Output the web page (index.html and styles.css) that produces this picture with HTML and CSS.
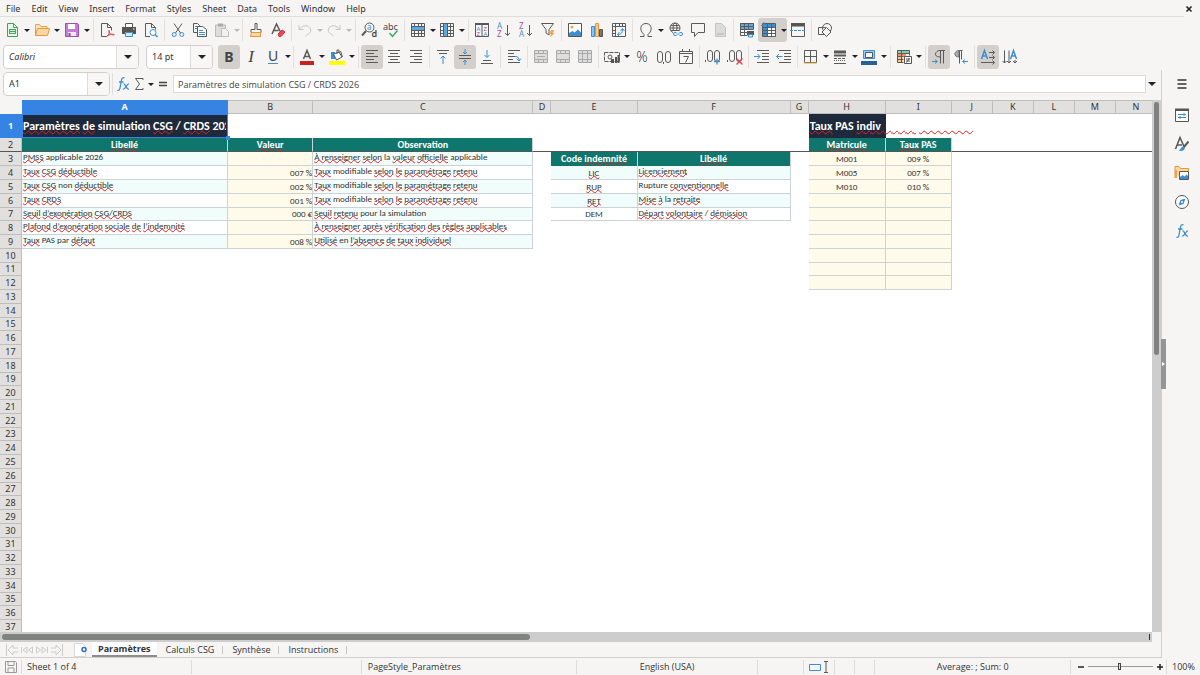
FILE: index.html
```html
<!DOCTYPE html>
<html lang="en">
<head>
<meta charset="utf-8">
<title>Paramètres de simulation</title>
<link rel="stylesheet" href="styles.css">
</head>
<body>
<header class="menubar">
  <nav class="menus" aria-label="Menu">
    <button>File</button><button>Edit</button><button>View</button><button>Insert</button><button>Format</button><button>Styles</button><button>Sheet</button><button>Data</button><button>Tools</button><button>Window</button><button>Help</button>
  </nav>
  <button class="close" aria-label="Close"><svg width="8" height="8" viewBox="0 0 8 8"><path d="M1.500 1.500l5 5M6.500 1.500l-5 5" stroke="#222" stroke-width="1.600" fill="none"/></svg></button>
</header>

<div class="toolbar standard" role="toolbar" aria-label="Standard">
  <button class="tool" aria-label="New"><svg viewBox="0 0 16 16"><path d="M3.500 1.500h6l4 4v9h-10z" fill="#e9f7ec" stroke="#3da558"/><path d="M9.500 1.500v4h4" class="n" stroke="#3da558"/><path d="M5 7h7v5h-7z" fill="#43a85b"/><path d="M6 8.500h5M6 10.500h5" stroke="#fff" stroke-width=".8"/></svg></button><button class="drop" aria-label="New options"></button>
  <button class="tool" aria-label="Open"><svg viewBox="0 0 16 16"><path d="M1.500 13.500v-11h4l1.500 2h6v2" fill="#fbe3bd" stroke="#e8a04a"/><path d="M1.500 13.500l2-7h12l-2 7z" fill="#fbd9a4" stroke="#e8963a"/></svg></button><button class="drop" aria-label="Open options"></button>
  <button class="tool" aria-label="Save"><svg viewBox="0 0 16 16"><path d="M1.500 1.500h12l1 1v12h-13z" fill="#c47fd4" stroke="#9d4fb3"/><path d="M4 2h7v5h-7z" fill="#fff"/><path d="M4 10h8v4h-8z" fill="#f3e8f6"/><path d="M5.500 11v3" stroke="#8d45a2" stroke-width="2"/></svg></button><button class="drop" aria-label="Save options"></button>
  <i class="sep"></i>
  <button class="tool" aria-label="Export as PDF"><svg viewBox="0 0 16 16"><path d="M8 14.500h-5.500v-13h6l4 4v3M8.500 1.500v4h4" class="k"/><path d="M7.500 14.500c3-1.500 3.500-6 2.500-6s0 4.500 5 4.500c1.500-1-4-1.500-7.500 1.500z" class="n" stroke="#e0404c"/></svg></button>
  <button class="tool" aria-label="Print"><svg viewBox="0 0 16 16"><path d="M4.500 5v-3.500h7v3.500" fill="#fff" stroke="#555"/><path d="M1 5h14v7h-3v-2h-8v2h-3z" fill="#555"/><path d="M4.500 10.500h7v4h-7z" fill="#d6ebf9" stroke="#3d8fd0"/><path d="M12 7h1.500" stroke="#fff"/></svg></button>
  <button class="tool" aria-label="Print preview"><svg viewBox="0 0 16 16"><path d="M7 14.500h-4.500v-13h6l4 4v2M8.500 1.500v4h4" class="k"/><circle cx="10" cy="10.500" r="3" fill="#fff" stroke="#3d8fd0"/><path d="M12 12.500l2.500 2.500" class="b" stroke-width="1.500"/></svg></button>
  <i class="sep"></i>
  <button class="tool" aria-label="Cut"><svg viewBox="0 0 16 16"><path d="M4 1.500l6.500 9.500M12 1.500l-6.500 9.500" class="k"/><circle cx="4.200" cy="12.500" r="2" class="b"/><circle cx="11.800" cy="12.500" r="2" class="b"/></svg></button>
  <button class="tool" aria-label="Copy"><svg viewBox="0 0 16 16"><path d="M5 10.500h-3.500v-9h4l2 2v1" class="k"/><path d="M5.500 4.500h5l4 3v7h-9z" fill="#fff" stroke="#555"/><path d="M3 4.500h2M3 6.500h2M7 8.500h4M7 10.500h6M7 12.500h6" class="b"/></svg></button>
  <button class="tool off" aria-label="Paste"><svg viewBox="0 0 16 16"><path d="M1.500 3h10v11.500h-10z" fill="#ddd" stroke="#bbb"/><path d="M4 1.500h5v3h-5z" fill="#aaa"/><path d="M7.500 6.500h4l3 3v5h-7z" fill="#f1f1f1" stroke="#bbb"/></svg></button><button class="drop slim off" aria-label="Paste options"></button>
  <i class="sep"></i>
  <button class="tool" aria-label="Clone formatting"><svg viewBox="0 0 16 16"><path d="M7 1.500h2v6h4v3h-10v-3h4z" class="k"/><path d="M3.500 10.500h9v4h-10z" fill="#fbd9a4" stroke="#e8963a"/></svg></button>
  <button class="tool" aria-label="Clear formatting"><svg viewBox="0 0 16 16"><path d="M2 12l4.500-10 4 8M3.500 8.500h5" class="k" stroke-width="1.500"/><path d="M8 12l4-4 3 2-4 4.500h-2z" fill="#ee4757" stroke="#c93442"/></svg></button>
  <i class="sep"></i>
  <button class="tool off" aria-label="Undo"><svg viewBox="0 0 16 16"><path d="M2 3v4.500h4.500M2.500 7c4-5 10-3.500 11 0s-2 4.500-5 7" class="n" stroke="#c4c4c4"/></svg></button><button class="drop slim off" aria-label="Undo steps"></button>
  <button class="tool off" aria-label="Redo"><svg viewBox="0 0 16 16"><path d="M14 3v4.500h-4.500M13.500 7c-4-5-10-3.500-11 0s2 4.500 5 7" class="n" stroke="#c4c4c4"/></svg></button><button class="drop off" aria-label="Redo steps"></button>
  <i class="sep"></i>
  <button class="tool" aria-label="Find and replace"><svg viewBox="0 0 16 16"><circle cx="8.500" cy="5.500" r="4.500" class="k"/><path d="M5 9l-4 4.500" class="k" stroke-width="2"/><text x="6" y="8" font-size="8" fill="#3d8fd0">a</text><text x="10.500" y="15" font-size="9" fill="#444" font-weight="600">d</text></svg></button>
  <button class="tool" aria-label="Spelling"><svg viewBox="0 0 16 16"><text x="0" y="7.500" font-size="9" fill="#444">abc</text><path d="M6.500 11l3 3.500 5-6" class="n" stroke="#35a663" stroke-width="1.400"/></svg></button>
  <i class="sep"></i>
  <button class="tool" aria-label="Row"><svg viewBox="0 0 16 16"><path d="M1 5h14v3h-14z" fill="#5aa9e0"/><path d="M1.500 1.500h13v13h-13zM1.500 4.500h13M1.500 8.500h13M1.500 11.500h13M4.500 1.500v3M8.500 1.500v3M11.500 1.500v3M4.500 8.500v6M8.500 8.500v6M11.500 8.500v6" class="k"/></svg></button><button class="drop slim" aria-label="Row options"></button>
  <button class="tool" aria-label="Column"><svg viewBox="0 0 16 16"><path d="M5 1h3.500v14h-3.500z" fill="#5aa9e0"/><path d="M1.500 1.500h13v13h-13zM4.500 1.500v13M8.500 1.500v13M11.500 1.500v13M1.500 4.500h3M1.500 8.500h3M1.500 11.500h3M8.500 4.500h6M8.500 8.500h6M8.500 11.500h6" class="k"/></svg></button><button class="drop" aria-label="Column options"></button>
  <i class="sep"></i>
  <button class="tool" aria-label="Sort"><svg viewBox="0 0 16 16"><path d="M1 1h14v2h-14z" fill="#555"/><path d="M1.500 1.500h13v13h-13zM8 2v12" class="k"/><text x="2.500" y="8.500" font-size="6" fill="#3d8fd0">A</text><text x="2.500" y="14" font-size="6" fill="#9d4fb3">Z</text><text x="9.500" y="8.500" font-size="6" fill="#9d4fb3">Z</text><text x="9.500" y="14" font-size="6" fill="#3d8fd0">A</text></svg></button>
  <button class="tool" aria-label="Sort ascending"><svg viewBox="0 0 16 16"><text x="1" y="7" font-size="8" fill="#3d8fd0">A</text><text x="1" y="15" font-size="8" fill="#9d4fb3">Z</text><path d="M11.500 3v10.500M9 11l2.500 2.500 2.500-2.500" class="k"/></svg></button>
  <button class="tool" aria-label="Sort descending"><svg viewBox="0 0 16 16"><text x="1" y="7" font-size="8" fill="#9d4fb3">Z</text><text x="1" y="15" font-size="8" fill="#3d8fd0">A</text><path d="M11.500 3v10.500M9 11l2.500 2.500 2.500-2.500" class="k"/></svg></button>
  <button class="tool" aria-label="AutoFilter"><svg viewBox="0 0 16 16"><path d="M1.500 1.500h12l-4.500 6v5.500l-3-2v-3.500z" class="k"/><path d="M11 8h3.500l-2 3h2l-4.500 4.500 1-3.500h-1.500z" fill="#f3a04a"/></svg></button>
  <i class="sep"></i>
  <button class="tool" aria-label="Insert image"><svg viewBox="0 0 16 16"><path d="M1.500 1.500h13v13h-13z" fill="#fff" stroke="#555"/><path d="M2 14v-3l3.500-2 2 1.500 3.500-3 3 3v3.500z" fill="#3d8fd0"/><circle cx="5" cy="5" r="1.500" fill="#f3a04a"/></svg></button>
  <button class="tool" aria-label="Insert chart"><svg viewBox="0 0 16 16"><path d="M2.500 4.500h3v10h-3z" fill="#8cc3ec" stroke="#3d8fd0"/><path d="M6.500 1.500h3v13h-3z" fill="#fbc98a" stroke="#e8963a"/><path d="M10.500 7.500h3v7h-3z" fill="#777" stroke="#555"/></svg></button>
  <button class="tool" aria-label="Pivot table"><svg viewBox="0 0 16 16"><path d="M1.500 1.500h13v13h-13zM1.500 4.500h13M4.500 1.500v13M8.500 1.500v3M11.500 1.500v3M1.500 8.500h3M1.500 11.500h3" class="k"/><path d="M6.500 12.500c4 0 5-2 5-5.500M8.500 10l-2 2.500 2 2M9.500 9l2-2.500 2 2.500" class="b"/></svg></button>
  <i class="sep"></i>
  <button class="tool" aria-label="Special character"><svg viewBox="0 0 16 16"><path d="M2 14.500h4v-2c-5-4-4-11 2-11s7 7 2 11v2h4" class="k"/></svg></button><button class="drop" aria-label="More characters"></button>
  <button class="tool" aria-label="Hyperlink"><svg viewBox="0 0 16 16"><circle cx="7" cy="6" r="5" class="k"/><ellipse cx="7" cy="6" rx="2" ry="5" class="k"/><path d="M2 6h10M3 3.500h8M3 8.500h8" class="k"/><path d="M5 9h10v6h-10z" fill="#f6f5f4"/><path d="M8.500 10.500h-1.500a1.500 1.500 0 000 3h1.500M11.500 10.500h1.500a1.500 1.500 0 010 3h-1.500M8.500 12h3" class="b"/></svg></button>
  <button class="tool" aria-label="Comment"><svg viewBox="0 0 16 16"><path d="M1.500 1.500h13v9h-6.500l-3.500 4v-4h-3z" class="k"/></svg></button>
  <button class="tool off" aria-label="Headers and footers"><svg viewBox="0 0 16 16"><path d="M3.500 1.500h6l4 4v9h-10z" fill="#dcdcdc" stroke="#c4c4c4"/><path d="M5 11h7v2h-7z" fill="#c4c4c4"/></svg></button>
  <i class="sep"></i>
  <button class="tool" aria-label="Define print area"><svg viewBox="0 0 16 16"><path d="M1 1h14v6h-14z" fill="#5aa9e0"/><path d="M1.500 1.500h13v6M1.500 1.500v12h7M1.500 4.500h13M1.500 7.500h13M1.500 10.500h7M5.500 1.500v12M9.500 1.500v6" class="k"/><path d="M8 9h7v4h-7z" fill="#555"/><path d="M9.500 12.500h4v2.500h-4z" fill="#d6ebf9" stroke="#3d8fd0"/></svg></button>
  <span class="pair on"><button class="tool" aria-label="Freeze rows and columns"><svg viewBox="0 0 16 16"><path d="M2 2h13v3h-13zM2 2h4v13h-4z" fill="#3d8fd0"/><path d="M6.500 5.500h8v9h-8z" fill="#fff"/><path d="M1.500 1.500h13v13h-13zM6.500 1.500v13M1.500 5.500h13M1.500 8.500h13M1.500 11.500h13M10.500 1.500v13" class="k"/><path d="M0 3.500h4M3 0v4" class="b"/></svg></button><button class="drop slim" aria-label="Freeze options"></button></span>
  <button class="tool" aria-label="Split window"><svg viewBox="0 0 16 16"><path d="M1 1h14v3.500h-14z" fill="#555"/><path d="M1.500 1.500h13v13h-13z" class="k"/><path d="M0 8.500h16" class="b" stroke-dasharray="3 1"/></svg></button>
  <i class="sep"></i>
  <button class="tool" aria-label="Show draw functions"><svg viewBox="0 0 16 16"><path d="M1.500 5.500h7v7h-7z" class="k"/><circle cx="10" cy="6" r="4.500" class="k"/><path d="M9.500 5.500l4.500 4.500-4.500 4.500-4.500-4.500z" fill="#f6f5f4" stroke="#555"/></svg></button>
</div>

<div class="toolbar formatting" role="toolbar" aria-label="Formatting">
  <div class="combo font"><input aria-label="Font name" value="Calibri" class="italic"><button aria-label="Font list"></button></div>
  <div class="combo size"><input aria-label="Font size" value="14 pt"><button aria-label="Size list"></button></div>
  <button class="tool letter on"><b>B</b></button>
  <button class="tool letter serif"><em>I</em></button>
  <button class="tool letter under"><span>U</span></button><button class="drop slim" aria-label="Underline styles"></button>
  <i class="sep"></i>
  <button class="tool" aria-label="Font color"><svg viewBox="0 0 16 16"><path d="M4.500 10l3.500-8.500 3.500 8.500M5.500 7.500h5" class="k" stroke-width="1.500"/><path d="M1 12h14v4h-14z" fill="#c9211e"/></svg></button><button class="drop" aria-label="Font colors"></button>
  <button class="tool" aria-label="Background color"><svg viewBox="0 0 16 16"><path d="M2 3h4v7h-4z" fill="#3d8fd0"/><path d="M4.500 5l5.500-2 3 5-5.500 3z" fill="#fff" stroke="#555"/><path d="M8 5v-4h2v3M11.500 2l2 6" class="k"/><path d="M0 12h16v4h-16z" fill="#ff0"/></svg></button><button class="drop" aria-label="Background colors"></button>
  <i class="sep"></i>
  <button class="tool on" aria-label="Align left"><svg viewBox="0 0 16 16"><path d="M2 1.500h12M2 4.500h8M2 7.500h12M2 10.500h8M2 13.500h12" class="k"/></svg></button>
  <button class="tool" aria-label="Center"><svg viewBox="0 0 16 16"><path d="M2 1.500h12M4 4.500h8M2 7.500h12M4 10.500h8M2 13.500h12" class="k"/></svg></button>
  <button class="tool" aria-label="Align right"><svg viewBox="0 0 16 16"><path d="M2 1.500h12M6 4.500h8M2 7.500h12M6 10.500h8M2 13.500h12" class="k"/></svg></button>
  <i class="sep"></i>
  <button class="tool" aria-label="Align top"><svg viewBox="0 0 16 16"><path d="M2 1.500h12M4 4.500h8" class="k"/><path d="M8 15v-8M5.500 9.500l2.500-2.500 2.500 2.500" class="b"/></svg></button>
  <button class="tool on" aria-label="Center vertically"><svg viewBox="0 0 16 16"><path d="M2 6.500h12M2 9.500h12" class="k"/><path d="M8 0v5M6 3l2 2 2-2M8 16v-5M6 13l2-2 2 2" class="b"/></svg></button>
  <button class="tool" aria-label="Align bottom"><svg viewBox="0 0 16 16"><path d="M4 11.500h8M2 14.500h12" class="k"/><path d="M8 1v7M5.500 6l2.500 2.500 2.500-2.500" class="b"/></svg></button>
  <i class="sep"></i>
  <button class="tool" aria-label="Wrap text"><svg viewBox="0 0 16 16"><path d="M2 1.500h12M2 4.500h6M2 7.500h7M2 10.500h5M2 13.500h12" class="k"/><path d="M9 7.500c3 0 4 1 4 4M10.500 9.500l2.500 2.500 2-2.500" class="b"/></svg></button>
  <i class="sep"></i>
  <button class="tool off" aria-label="Merge and center"><svg viewBox="0 0 16 16"><path d="M1.500 1.500h13v12h-13z" fill="#ddd" stroke="#aaa"/><path d="M1.500 4.500h13M1.500 10.500h13M5.500 1.500v3M10.500 1.500v3M5.500 10.500v3M10.500 10.500v3M4 7.500h8" class="g"/></svg></button>
  <button class="tool off" aria-label="Merge cells"><svg viewBox="0 0 16 16"><path d="M1.500 1.500h13v12h-13z" fill="#ddd" stroke="#aaa"/><path d="M1.500 4.500h13M1.500 10.500h13M5.500 1.500v3M10.500 1.500v3M5.500 10.500v3M10.500 10.500v3" class="g"/></svg></button>
  <button class="tool off" aria-label="Split cells"><svg viewBox="0 0 16 16"><path d="M1.500 1.500h13v12h-13z" fill="#ddd" stroke="#aaa"/><path d="M1.500 4.500h13M1.500 10.500h13M5.500 1.500v12M10.500 1.500v12" class="g"/></svg></button>
  <i class="sep"></i>
  <button class="tool" aria-label="Format as currency"><svg viewBox="0 0 16 16"><path d="M0.500 3.500h15v9h-15z" class="k" stroke-dasharray="4 1"/><circle cx="6" cy="8" r="2" class="k"/><path d="M7 10h3v4h-3zM11 8h2v6h-2zM13.500 6h2v8h-2z" fill="#555"/></svg></button><button class="drop" aria-label="Currencies"></button>
  <button class="tool letter" aria-label="Format as percent"><span class="glyph">%</span></button>
  <button class="tool" aria-label="Format as number"><svg viewBox="0 0 16 16"><rect x="1.500" y="2.500" width="5" height="11" rx="2.500" class="k"/><rect x="9.500" y="2.500" width="5" height="11" rx="2.500" class="k"/><path d="M7.500 13v2" class="k"/></svg></button>
  <button class="tool" aria-label="Format as date"><svg viewBox="0 0 16 16"><path d="M1.500 2.500h13v12h-13zM1.500 4.500h13M4.500 0v3M11.500 0v3M5.500 7.500h5l-3 6" class="k"/></svg></button>
  <i class="sep"></i>
  <button class="tool" aria-label="Add decimal place"><svg viewBox="0 0 16 16"><rect x="2.500" y="1.500" width="5" height="11" rx="2.500" class="k"/><rect x="9.500" y="1.500" width="5" height="11" rx="2.500" class="k"/><path d="M.5 11v2" class="k"/><path d="M9 12.500h6M12 9.500v6" class="b" stroke-width="1.300"/></svg></button>
  <button class="tool" aria-label="Delete decimal place"><svg viewBox="0 0 16 16"><rect x="2.500" y="1.500" width="5" height="11" rx="2.500" class="k"/><rect x="9.500" y="1.500" width="5" height="11" rx="2.500" class="k"/><path d="M.5 11v2" class="k"/><path d="M9.500 9.500l6 6M15.500 9.500l-6 6" class="n" stroke="#e0404c" stroke-width="1.300"/></svg></button>
  <i class="sep"></i>
  <button class="tool" aria-label="Increase indent"><svg viewBox="0 0 16 16"><path d="M3 1.500h12M8 4.500h7M8 7.500h7M8 10.500h7M3 13.500h12" class="k"/><path d="M0 7.500h6M3.500 5l2.500 2.500-2.500 2.500" class="b"/></svg></button>
  <button class="tool" aria-label="Decrease indent"><svg viewBox="0 0 16 16"><path d="M3 1.500h12M8 4.500h7M8 7.500h7M8 10.500h7M3 13.500h12" class="k"/><path d="M6.500 7.500h-6M3 5l-2.500 2.500 2.500 2.500" class="b"/></svg></button>
  <i class="sep"></i>
  <button class="tool" aria-label="Borders"><svg viewBox="0 0 16 16"><path d="M1.500 1.500h12v12h-12zM7.500 1.500v12M1.500 7.500h12" class="k"/><path d="M1 14h13" class="n" stroke="#e8a04a"/></svg></button><button class="drop slim" aria-label="Border presets"></button>
  <button class="tool" aria-label="Border style"><svg viewBox="0 0 16 16"><path d="M2 3h12" class="k" stroke-width="3"/><path d="M2 6.500h12" class="k" stroke-width="2"/><path d="M2 9.500h12" class="k" stroke-dasharray="3 1"/><path d="M2 11.500h12" class="k" stroke-dasharray="1 1"/><path d="M2 14.500h12" class="k"/></svg></button><button class="drop slim" aria-label="Border styles"></button>
  <button class="tool" aria-label="Border color"><svg viewBox="0 0 16 16"><path d="M2.500 1.500h11v8h-11z" fill="#9fcbef" stroke="#3d8fd0"/><path d="M4.500 3.500h7v5h-7z" fill="#f6f5f4" stroke="#555"/><path d="M0 12h16v4h-16z" fill="#2a6099"/></svg></button><button class="drop" aria-label="Border colors"></button>
  <i class="sep"></i>
  <button class="tool" aria-label="Conditional formatting"><svg viewBox="0 0 16 16"><path d="M1 1h13v3h-13z" fill="#8bd0a0"/><path d="M1 4h9v4h-9z" fill="#f08b80"/><path d="M1 8h6v5h-6z" fill="#fbc98a"/><path d="M1.500 1.500h12v5M1.500 1.500v12h6M1.500 4.500h12M1.500 7.500h6M1.500 10.500h6M5.500 1.500v12" class="k"/><path d="M8.500 7.500h7v7h-7z" fill="#fff" stroke="#555"/><path d="M10 10h4M10 12h4M13.500 9l-3 4.500" class="k"/></svg></button><button class="drop" aria-label="Conditional formats"></button>
  <i class="sep"></i>
  <button class="tool on" aria-label="Left to right"><svg viewBox="0 0 16 16"><path d="M9 8c-7 0-5-6.500 0-6.500h5M9.500 1.500v13M12.500 1.500v13" class="k"/><path d="M1 12.500h5M4 10.500l2.500 2-2.500 2" class="b"/></svg></button>
  <button class="tool" aria-label="Right to left"><svg viewBox="0 0 16 16"><path d="M6 8c-6 0-5-6.500 0-6.500z" fill="#aaa" stroke="#777"/><path d="M6.500 14.500v-13h3M8.500 1.500v9" class="k"/><path d="M15 12.500h-5M12 10.500l-2.500 2 2.500 2" class="b"/></svg></button>
  <i class="sep"></i>
  <button class="tool on" aria-label="Text direction left to right"><svg viewBox="0 0 16 16"><path d="M1.500 10l3-8.500 3 8.500M2.500 7h4" class="b" stroke-width="1.500"/><path d="M9 3.500h5.500M9 8.500h5.500M1 13.500h13M12.500 1.500l2 2-2 2M12.500 6.500l2 2-2 2M12.500 11.500l2 2-2 2" class="k"/></svg></button>
  <button class="tool" aria-label="Text direction top to bottom"><svg viewBox="0 0 16 16"><path d="M8.500 10l3-8.500 3 8.500M9.500 7h4" class="b" stroke-width="1.500"/><path d="M2.500 1.500v12.500M7 1.500v12.500M13 11v3M.5 12l2 2 2-2M5 12l2 2 2-2M11 12l2 2 2-2" class="k"/></svg></button>
</div>

<main class="workspace">
  <section class="document">
    <div class="formulabar">
      <div class="combo name"><input aria-label="Name box" value="A1"><button aria-label="Named ranges"></button></div>
      <i class="sep"></i>
      <button class="fx" aria-label="Function wizard"><svg width="14" height="16" viewBox="0 0 14 16"><use href="#fx"/></svg></button>
      <button class="fx" aria-label="Sum"><svg width="10" height="14" viewBox="0 0 10 14"><path d="M9 3v-1.500h-7.500l4 5.500-4 5.500h7.500v-1.500" class="k"/></svg></button><button class="drop" aria-label="Sum functions"></button>
      <button class="fx" aria-label="Formula"><svg width="10" height="10" viewBox="0 0 10 10"><path d="M1 3.500h8M1 6.500h8" stroke="#444" stroke-width="1.500"/></svg></button>
      <input class="formula" aria-label="Formula input" value="Paramètres de simulation CSG / CRDS 2026">
      <button class="expand" aria-label="Expand formula bar"></button>
    </div>
    <div class="grid-area">
      <div class="sheet">
        <table>
          <colgroup><col class="w-head"><col class="w-a"><col class="w-b"><col class="w-c"><col class="w-d"><col class="w-e"><col class="w-f"><col class="w-d"><col class="w-h"><col class="w-i"><col class="w-std" span="5"></colgroup>
          <thead><tr><td></td><th class="sel">A</th><th>B</th><th>C</th><th>D</th><th>E</th><th>F</th><th>G</th><th>H</th><th>I</th><th>J</th><th>K</th><th>L</th><th>M</th><th>N</th></tr></thead>
          <tbody>
            <tr class="title"><th class="sel">1</th><td class="navy cursor"><div class="clip"><u>Paramètres</u> <u>de</u> simulation <u>CSG</u> / <u>CRDS</u> 2026</div></td><td></td><td></td><td></td><td></td><td></td><td></td><td class="navy"><div class="spill"><u>Taux</u> PAS <u>indiv&nbsp;&nbsp;&nbsp;&nbsp;&nbsp;&nbsp;&nbsp;&nbsp;&nbsp;&nbsp;&nbsp;&nbsp;&nbsp;</u> <u>&nbsp;&nbsp;&nbsp;&nbsp;&nbsp;&nbsp;&nbsp;&nbsp;&nbsp;&nbsp;&nbsp;&nbsp;&nbsp;&nbsp;&nbsp;&nbsp;&nbsp;&nbsp;&nbsp;&nbsp;</u></div></td><td></td><td></td><td></td><td></td><td></td><td></td></tr>
            <tr class="freeze"><th>2</th><td class="teal"><u>Libellé</u></td><td class="teal"><u>Valeur</u></td><td class="teal">Observation</td><td></td><td></td><td></td><td></td><td class="teal"><u>Matricule</u></td><td class="teal"><u>Taux</u> PAS</td><td></td><td></td><td></td><td></td><td></td></tr>
            <tr><th>3</th><td class="mint"><u>PMSS</u> applicable 2026</td><td class="cream"></td><td class="mint"><u>À renseigner</u> <u>selon</u> la <u>valeur</u> <u>officielle</u> applicable</td><td></td><td class="teal">Code <u>indemnité</u></td><td class="teal"><u>Libellé</u></td><td></td><td class="cream mid">M001</td><td class="cream mid">009 %</td></tr>
            <tr><th>4</th><td class="plain"><u>Taux</u> <u>CSG</u> <u>déductible</u></td><td class="cream">007 %</td><td class="plain"><u>Taux</u> modifiable <u>selon</u> <u>le</u> <u>paramétrage</u> <u>retenu</u></td><td></td><td class="mint mid"><u>LIC</u></td><td class="mint"><u>Licenciement</u></td><td></td><td class="cream mid">M005</td><td class="cream mid">007 %</td></tr>
            <tr><th>5</th><td class="mint"><u>Taux</u> <u>CSG</u> non <u>déductible</u></td><td class="cream">002 %</td><td class="mint"><u>Taux</u> modifiable <u>selon</u> <u>le</u> <u>paramétrage</u> <u>retenu</u></td><td></td><td class="plain mid"><u>RUP</u></td><td class="plain">Rupture <u>conventionnelle</u></td><td></td><td class="cream mid">M010</td><td class="cream mid">010 %</td></tr>
            <tr><th>6</th><td class="plain"><u>Taux</u> <u>CRDS</u></td><td class="cream">001 %</td><td class="plain"><u>Taux</u> modifiable <u>selon</u> <u>le</u> <u>paramétrage</u> <u>retenu</u></td><td></td><td class="mint mid"><u>RET</u></td><td class="mint"><u>Mise</u> <u>à</u> la <u>retraite</u></td><td></td><td class="cream"></td><td class="cream"></td></tr>
            <tr><th>7</th><td class="mint"><u>Seuil</u> <u>d’exonération</u> <u>CSG/CRDS</u></td><td class="cream">000 €</td><td class="mint"><u>Seuil</u> <u>retenu</u> pour la simulation</td><td></td><td class="plain mid">DEM</td><td class="plain"><u>Départ</u> <u>volontaire</u> / <u>démission</u></td><td></td><td class="cream"></td><td class="cream"></td></tr>
            <tr><th>8</th><td class="plain"><u>Plafond</u> <u>d’exonération</u> <u>sociale</u> <u>de</u> <u>l’indemnité</u></td><td class="cream"></td><td class="plain"><u>À renseigner</u> <u>après</u> <u>vérification</u> <u>des</u> <u>règles</u> <u>applicables</u></td><td></td><td></td><td></td><td></td><td class="cream"></td><td class="cream"></td></tr>
            <tr><th>9</th><td class="mint"><u>Taux</u> PAS par <u>défaut</u></td><td class="cream">008 %</td><td class="mint"><u>Utilisé</u> en <u>l’absence</u> <u>de</u> <u>taux</u> <u>individuel</u></td><td></td><td></td><td></td><td></td><td class="cream"></td><td class="cream"></td></tr>
            <tr><th>10</th><td colspan="7"></td><td class="cream"></td><td class="cream"></td></tr>
            <tr><th>11</th><td colspan="7"></td><td class="cream"></td><td class="cream"></td></tr>
            <tr><th>12</th><td colspan="7"></td><td class="cream"></td><td class="cream"></td></tr>
            <tr><th>13</th></tr><tr><th>14</th></tr><tr><th>15</th></tr><tr><th>16</th></tr><tr><th>17</th></tr><tr><th>18</th></tr><tr><th>19</th></tr><tr><th>20</th></tr><tr><th>21</th></tr><tr><th>22</th></tr><tr><th>23</th></tr><tr><th>24</th></tr><tr><th>25</th></tr><tr><th>26</th></tr><tr><th>27</th></tr><tr><th>28</th></tr><tr><th>29</th></tr><tr><th>30</th></tr><tr><th>31</th></tr><tr><th>32</th></tr><tr><th>33</th></tr><tr><th>34</th></tr><tr><th>35</th></tr><tr><th>36</th></tr><tr><th>37</th></tr>
          </tbody>
        </table>
      </div>
      <div class="vscroll"><div class="thumb"></div></div>
    </div>
    <div class="hscroll"><div class="thumb"></div><div class="splitter"></div></div>
    <div class="tabs">
      <div class="nav">
        <button aria-label="First sheet"><svg width="14" height="14" viewBox="0 0 14 14"><path d="M1.500 1v12M13 5h-5v-3l-5 5 5 5v-3h5" class="p"/></svg></button>
        <button aria-label="Previous sheet"><svg width="14" height="14" viewBox="0 0 14 14"><path d="M1.500 4v6M7 4l-4 3 4 3zM12.500 4l-4 3 4 3z" class="p"/></svg></button>
        <button aria-label="Next sheet"><svg width="14" height="14" viewBox="0 0 14 14"><path d="M1.500 4l4 3-4 3zM7 4l4 3-4 3zM12.500 4v6" class="p"/></svg></button>
        <button aria-label="Last sheet"><svg width="14" height="14" viewBox="0 0 14 14"><path d="M12.500 1v12M1 5h5v-3l5 5-5 5v-3h-5" class="p"/></svg></button>
      </div>
      <button class="add" aria-label="Add sheet"><svg width="14" height="16" viewBox="0 0 14 16"><path d="M.5 1.500h8l3 3v10h-11z" fill="#fff" stroke="#d8d8d8"/><circle cx="10" cy="7.500" r="2" fill="#fff" stroke="#2a6cc0" stroke-width="1.500"/></svg></button>
      <button class="tab current">Paramètres</button><button class="tab">Calculs CSG</button><button class="tab">Synthèse</button><button class="tab">Instructions</button>
    </div>
  </section>
  <aside class="sidebar" aria-label="Sidebar">
    <button class="menu" aria-label="Sidebar settings"><svg viewBox="0 0 16 16"><path d="M3.500 4h9M3.500 8h9M3.500 12h9" stroke="#333" stroke-width="1.600"/></svg></button>
    <button aria-label="Properties"><svg viewBox="0 0 16 16"><path d="M1.500 2.500h13v12h-13z" fill="#fff" stroke="#555"/><path d="M1 1.500h14v2.500h-14z" fill="#555"/><path d="M4 7.500h8M4 10.500h8M10 5.800v3M6 9v3" class="b"/></svg></button>
    <button aria-label="Styles"><svg viewBox="0 0 16 16"><path d="M1.500 13l4.500-11.500 4 9M3 9h5" class="k" stroke-width="1.600"/><path d="M14.500 5.500l-5 6" class="k" stroke-width="2"/><path d="M9 10.500c-3 1-1.500 3-4.500 4 4 1 6 0 6.500-3z" fill="#3d8fd0"/></svg></button>
    <button aria-label="Gallery"><svg viewBox="0 0 16 16"><path d="M1 13v-11.500h4l1.500 2h8v3" fill="#fbd9a4" stroke="#e8963a"/><path d="M1 13v-8h2v8z" fill="#f3a04a"/><path d="M5.500 6.500h9v8h-9z" fill="#fff" stroke="#555"/><path d="M6 14v-2l2.500-2 2 1.500 2-2 1.500 1.500v3z" fill="#3d8fd0"/></svg></button>
    <button aria-label="Navigator"><svg viewBox="0 0 16 16"><circle cx="8" cy="8" r="6.500" fill="#fff" stroke="#555"/><path d="M11.500 4.500l-2 5.500-5 1.500 2-5.500z" fill="#3d8fd0"/><circle cx="8" cy="8" r="1" fill="#fff"/></svg></button>
    <button aria-label="Functions"><svg viewBox="0 0 14 16"><g id="fx" fill="none" stroke="#3d8fd0" stroke-width="1.300"><path d="M8.500 2c-2-1-2.800.5-3.200 3l-1.300 7c-.4 2-1.200 3-2.500 2M3 6h4.500"/><path d="M7.500 8c2-1 2.500 6 5.500 5M13 8c-2-.5-4 6-6 5"/></g></svg></button>
    <button class="handle" aria-label="Hide sidebar"></button>
  </aside>
</main>

<footer class="statusbar">
  <span class="s-save"><svg width="12" height="12" viewBox="0 0 12 12"><path d="M.5 .5h10l1 1v10h-11zM3 .5v4h6v-4M3 11v-4h6v4" class="n" stroke="#999"/></svg></span>
  <span class="s-sheet">Sheet 1 of 4</span>
  <span class="s-gap"></span>
  <span class="s-style">PageStyle_Paramètres</span>
  <span class="s-lang">English (USA)</span>
  <span class="s-blank"></span>
  <span class="s-mode"><svg width="20" height="12" viewBox="0 0 20 12"><path d="M.5 3.500h11v6h-11z" class="b"/><path d="M15 .5h4M15 11.500h4M17 .5v11" class="k"/></svg></span>
  <span class="s-cell"></span>
  <span class="s-cell"></span>
  <span class="s-sum">Average: ; Sum: 0</span>
  <span class="s-zoom"><button aria-label="Zoom out"><svg width="8" height="8" viewBox="0 0 8 8"><path d="M1 4h6" stroke="#222" stroke-width="1.500"/></svg></button><input type="range" aria-label="Zoom" min="0" max="100" value="49"><button aria-label="Zoom in"><svg width="8" height="8" viewBox="0 0 8 8"><path d="M1 4h6M4 1v6" stroke="#222" stroke-width="1.500"/></svg></button></span>
  <span class="s-pct">100%</span>
</footer>
</body>
</html>
```
FILE: styles.css
```css
* { box-sizing: border-box; }
body { margin: 0; height: 100vh; display: flex; flex-direction: column; overflow: hidden; background: #f6f5f4; color: #333; font: 9px/14px "Noto Sans", sans-serif; }
button { border: 0; padding: 0; margin: 0; background: none; color: inherit; font: inherit; }
input { font: inherit; color: inherit; min-width: 0; }
svg { display: block; overflow: visible; }
svg text { font-family: "Noto Sans", sans-serif; }
.k { fill: none; stroke: #5a5a5a; }
.b { fill: none; stroke: #3d8fd0; }
.g { fill: none; stroke: #aaa; }
.p { fill: none; stroke: #ccc; }
.n { fill: none; }

.menubar { display: flex; justify-content: space-between; height: 17px; flex: none; padding: 1px 7px 0 6px; position: relative; }
.menubar::after { content: ""; position: absolute; left: 0; right: 16px; bottom: 0; height: 1px; background: #deddda; }
.menus { display: flex; gap: 11px; }
.close { width: 8px; display: flex; align-items: center; }

.toolbar { display: flex; align-items: center; height: 26px; flex: none; padding-left: 1px; }
.tool { flex: none; width: 22px; height: 24px; display: flex; align-items: center; justify-content: center; border-radius: 3px; }
.tool svg { width: 16px; height: 16px; }
.on { background: #d3d0cc; border-radius: 3px; }
.pair { display: flex; }
.drop { flex: none; width: 8px; height: 24px; display: flex; align-items: center; justify-content: center; }
.drop.slim { width: 7px; }
.drop::before, .combo button::before, .expand::before { content: ""; border: 3px solid transparent; border-top: 3px solid #222; border-bottom: 0; }
.drop.off::before { border-top-color: #bbb; }
.sep { flex: none; width: 1px; height: 22px; margin: 0 2px; background: #e2e0dd; }
.toolbar.formatting { height: 27px; padding-left: 3px; }
.combo { display: flex; height: 24px; border: 1px solid #d2cfcb; border-radius: 4px; background: #fff; overflow: hidden; }
.combo input { flex: 1; border: 0; padding: 0 5px; background: none; outline: 0; }
.combo button { width: 22px; border-left: 1px solid #dedbd8; background: #f8f7f6; display: flex; align-items: center; justify-content: center; }
.combo button::before, .expand::before { border-width: 4px 4px 0; }
.font { width: 136px; }
.size { width: 67px; margin: 0 5px 0 7px; }
.italic { font-style: italic; }
.letter { font-size: 14px; line-height: 20px; color: #444; }
.serif { font-family: "Liberation Serif", serif; font-size: 17px; }
.under span { border-bottom: 1px solid #3d8fd0; line-height: 14px; }
.glyph { font-size: 14px; font-weight: 300; }

.workspace { flex: 1; min-height: 0; display: flex; }
.document { flex: 1; min-width: 0; display: flex; flex-direction: column; border-right: 1px solid #d0d0d0; }
.formulabar { height: 30px; flex: none; padding: 1px 3px; display: flex; align-items: center; align-content: center; padding-bottom: 3px; }
.name { width: 107px; }
.fx { width: 16px; height: 20px; display: flex; align-items: center; justify-content: center; }
.formula { flex: 1; height: 18px; margin-left: 2px; border: 1px solid #dcdad7; background: #fff; padding: 0 4px; color: #444; font-family: "Open Sans", "Noto Sans", sans-serif; }
.expand { width: 12px; height: 20px; display: flex; align-items: center; justify-content: center; }

.grid-area { flex: 1; min-height: 0; display: flex; background: #fff; }
.sheet { flex: 1; min-width: 0; overflow: hidden; }
table { table-layout: fixed; width: 1157px; border-collapse: separate; border-spacing: 0; font-family: Carlito, Lato, sans-serif; line-height: 10px; }
.w-head { width: 22px; } .w-a { width: 206px; } .w-b { width: 85px; } .w-c { width: 220px; } .w-d { width: 18px; }
.w-e { width: 86px; } .w-f { width: 153px; } .w-h { width: 77px; } .w-i { width: 66px; } .w-std { width: 41px; }
tr { height: 14px; }
tbody tr:nth-child(4n+7) { height: 13px; }
td, th { padding: 0; height: inherit; overflow: hidden; white-space: nowrap; }
th { background: #e1e0df; border: solid #bfbebd; border-width: 0 1px 1px 0; font: 9px/12px "Noto Sans", sans-serif; color: #333; }
thead th { border-top: 1px solid #bfbebd; }
thead td { background: #f6f5f4; }
th.sel { background: #3584e4; color: #fff; font-weight: 700; border-color: #3584e4; }
tr.title { height: 24px; }
u { text-decoration: underline wavy #e02020 1px; text-underline-offset: -1px; text-decoration-skip-ink: none; }
.mint, .plain, .cream { border: solid #ccd3d6; border-width: 0 1px 1px 0; vertical-align: top; }
.mint { background: #f0fdfa; }
.plain { background: #fff; }
.cream { background: #fffbeb; text-align: right; vertical-align: middle; }
.mint:not(.mid), .plain:not(.mid) { padding-left: 1px; }
td.mid { text-align: center; vertical-align: middle; }
.teal { background: #0f766e; color: #fff; font-size: 10px; font-weight: 700; text-align: center; border-right: 1px solid #ccd3d6; }
.navy { background: #1e293b; color: #fff; font-size: 12px; font-weight: 700; line-height: 20px; overflow: visible; padding-left: 1px; }
.navy u { text-underline-offset: 0; }
.clip { width: 203px; overflow: hidden; }
.spill { width: 76px; }
.cursor { position: relative; outline: 1px solid #3584e4; outline-offset: -1px; }
.cursor::after { content: ""; position: absolute; right: -2px; bottom: -2px; width: 4px; height: 4px; background: #3584e4; }
.freeze td, .freeze th { border-bottom: 1px solid #555; }

.vscroll { width: 9px; background: #cdcdcd; padding: 2px; }
.vscroll .thumb { width: 5px; height: 48%; border-radius: 3px; background: #818181; }
.hscroll { height: 10px; flex: none; display: flex; justify-content: space-between; margin-right: 9px; padding: 2px; background: #cdcdcd; }
.hscroll .thumb { width: 46%; height: 6px; border-radius: 3px; background: #818381; }
.splitter { width: 1px; background: #333; }

.tabs { height: 16px; flex: none; display: flex; align-items: stretch; border-bottom: 1px solid #d0cfcd; font-family: "Open Sans", "Noto Sans", sans-serif; }
.nav { display: flex; align-items: center; padding-left: 5px; width: 74px; }
.nav button { width: 15px; }
.add { width: 18px; }
.tab { position: relative; padding: 0 9px; }
.tab + .tab::after { content: ""; position: absolute; right: 0; top: 4px; height: 8px; width: 1px; background: #c8c6c3; }
.tab.current { background: #fff; font-weight: 700; padding: 0 6px; border-bottom: 2px solid #8d8d8d; }

.sidebar { width: 38px; flex: none; position: relative; display: flex; flex-direction: column; align-items: center; gap: 9px; padding: 4px 0 0 2px; }
.sidebar button { width: 20px; height: 20px; display: flex; align-items: center; justify-content: center; }
.sidebar svg { width: 16px; height: 16px; }
.sidebar .menu { margin-bottom: 2px; }
.sidebar .handle { position: absolute; left: -1px; top: 269px; width: 5px; height: 50px; background: #959595; }
.handle::before { content: ""; border: 2px solid transparent; border-left: 3px solid #fff; border-right: 0; }

.statusbar { height: 17px; flex: none; display: flex; align-items: center; font-family: "Open Sans", "Noto Sans", sans-serif; }
.statusbar > span { height: 14px; border-right: 1px solid #dedcda; display: flex; align-items: center; justify-content: center; }
.s-save { width: 22px; }
.statusbar .s-sheet { width: 170px; padding-left: 5px; justify-content: flex-start; }
.s-gap { flex: 170; }
.statusbar .s-style { flex: 210; padding-left: 6px; justify-content: flex-start; }
.s-lang { flex: 181; }
.s-blank { flex: 46; }
.s-mode { width: 31px; }
.s-cell { width: 20px; }
.s-sum { flex: 196; }
.s-zoom { width: 96px; padding-left: 4px; }
.statusbar .s-pct { width: 33px; border: 0; }
.s-zoom input { appearance: none; width: 65px; height: 10px; margin: 0 3px; background: linear-gradient(#999, #999) center / 100% 1px no-repeat; }
.s-zoom input::-webkit-slider-thumb { appearance: none; width: 3px; height: 7px; border: 1px solid #444; background: #ddd; }
```
